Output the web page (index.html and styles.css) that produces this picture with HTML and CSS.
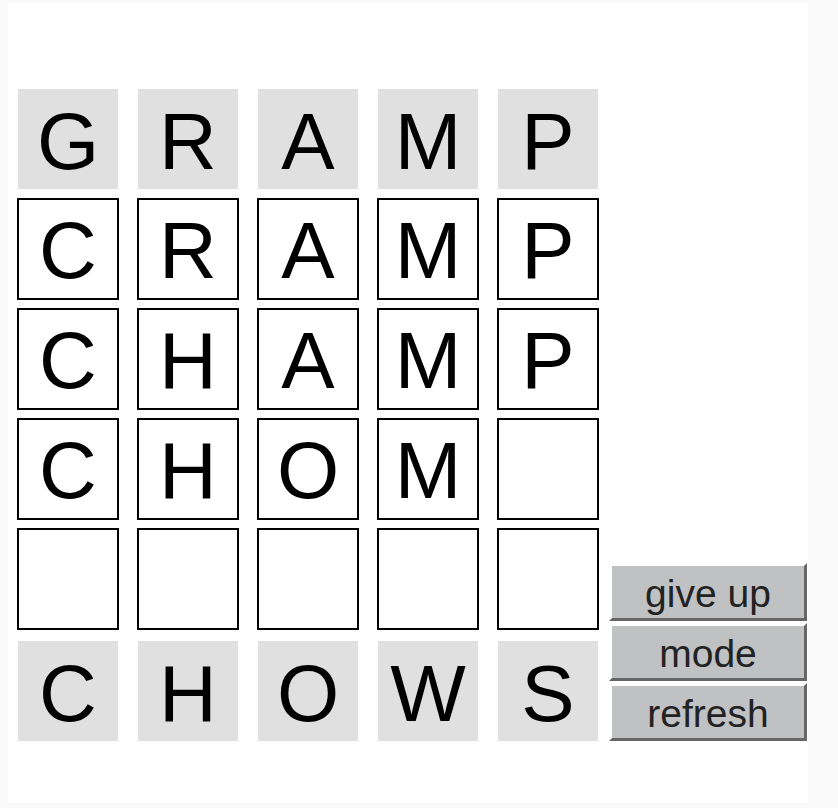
FILE: index.html
```html
<!DOCTYPE html>
<html lang="en">
<head>
    <meta charset="UTF-8">
    <title>Word Ladder</title>
    <link rel="stylesheet" href="styles.css">
</head>
<body>
    <div class="frame">
        <div class="game">
            <!-- Board -->
            <div class="board">
                <div class="tile fixed">G</div>
                <div class="tile fixed">R</div>
                <div class="tile fixed">A</div>
                <div class="tile fixed">M</div>
                <div class="tile fixed">P</div>

                <div class="tile">C</div>
                <div class="tile">R</div>
                <div class="tile">A</div>
                <div class="tile">M</div>
                <div class="tile">P</div>

                <div class="tile">C</div>
                <div class="tile">H</div>
                <div class="tile">A</div>
                <div class="tile">M</div>
                <div class="tile">P</div>

                <div class="tile">C</div>
                <div class="tile">H</div>
                <div class="tile">O</div>
                <div class="tile">M</div>
                <div class="tile"></div>

                <div class="tile"></div>
                <div class="tile"></div>
                <div class="tile"></div>
                <div class="tile"></div>
                <div class="tile"></div>

                <div class="tile fixed target">C</div>
                <div class="tile fixed target">H</div>
                <div class="tile fixed target">O</div>
                <div class="tile fixed target">W</div>
                <div class="tile fixed target">S</div>
            </div>

            <!-- Controls -->
            <div class="controls">
                <button type="button" class="btn">give up</button>
                <button type="button" class="btn">mode</button>
                <button type="button" class="btn">refresh</button>
            </div>
        </div>
    </div>
</body>
</html>
```

FILE: styles.css
```css
/* Page */
body {
    margin: 0;
    padding: 0;
    background-color: #f9f9f9;
    font-family: 'Liberation Sans', Arial, sans-serif;
}

/* White game area */
.frame {
    width: 800px;
    height: 800px;
    margin: 3px 0 0 8px;
    background-color: #ffffff;
}

.game {
    display: flex;
    align-items: flex-end;
    gap: 11px;
    padding: 86px 0 0 10px;
}

/* Letter grid */
.board {
    display: grid;
    grid-template-columns: repeat(5, 100px);
    grid-template-rows: repeat(5, 100px) 102px;
    column-gap: 20px;
    row-gap: 10px;
}

.tile {
    box-sizing: border-box;
    width: 102px;
    height: 102px;
    margin: -1px;
    border: 2px solid #000;
    padding-top: 4px;
    font-size: 80px;
    line-height: 94px;
    text-align: center;
    color: #000;
}

.tile.fixed {
    width: 100px;
    height: 100px;
    margin: 0;
    border: none;
    padding-top: 6px;
    background-color: #e0e0e0;
}

.tile.target {
    align-self: end;
}

/* Buttons */
.controls {
    display: flex;
    flex-direction: column;
    gap: 2px;
}

.btn {
    box-sizing: border-box;
    width: 198px;
    height: 58px;
    padding: 4px 0 0 0;
    border: 3px solid;
    border-color: #ffffff #666666 #666666 #ffffff;
    background-color: #bfc1c2;
    color: #222;
    font-family: 'Liberation Sans', Arial, sans-serif;
    font-size: 39px;
    line-height: 48px;
    cursor: pointer;
}
```
